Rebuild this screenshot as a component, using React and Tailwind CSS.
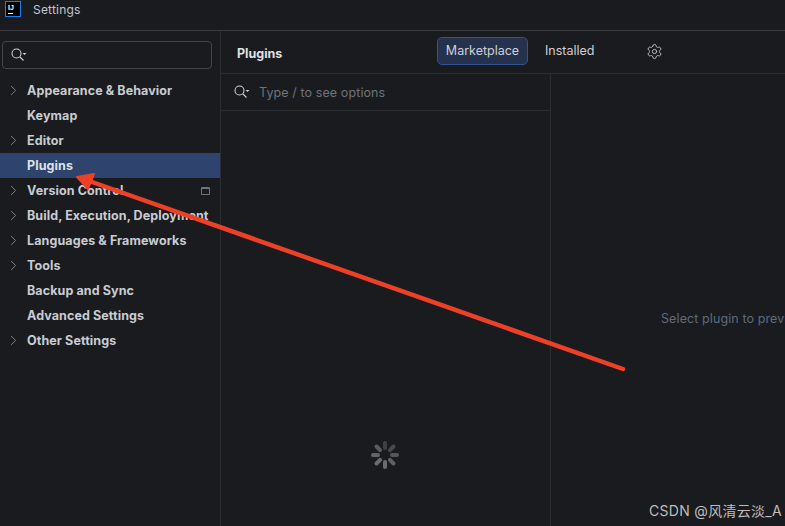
import { ChevronRight, Settings } from "lucide-react"

const items = [
  { label: "Appearance & Behavior", arrow: true },
  { label: "Keymap" },
  { label: "Editor", arrow: true },
  { label: "Plugins", selected: true },
  { label: "Version Control", arrow: true, badge: true },
  { label: "Build, Execution, Deployment", arrow: true },
  { label: "Languages & Frameworks", arrow: true },
  { label: "Tools", arrow: true },
  { label: "Backup and Sync" },
  { label: "Advanced Settings" },
  { label: "Other Settings", arrow: true },
]

function SearchIcon() {
  return (
    <svg width="16" height="14" viewBox="0 0 16 14" fill="none" className="shrink-0">
      <circle cx="5.5" cy="5.5" r="4.5" stroke="#ced0d6" strokeWidth="1.1" />
      <path d="M9 9l3.5 3.5" stroke="#ced0d6" strokeWidth="1.1" />
      <path d="M11.5 5h4l-2 2z" fill="#ced0d6" />
    </svg>
  )
}

function Logo() {
  return (
    <div className="w-4 h-4 border border-[#1a7fe8] bg-black flex flex-col pl-[2px] pt-[2px] shrink-0">
      <span className="font-['Liberation_Sans',sans-serif] font-bold text-[7px] leading-[7px] text-white">IJ</span>
      <span className="w-[5px] h-px bg-white mt-[2px]" />
    </div>
  )
}

function Spinner() {
  const spokes = [0, 45, 90, 135, 180, 225, 270, 315]
  const shades = ["#3f4145", "#47494d", "#55575b", "#5e6064", "#6a6c70", "#6a6c70", "#626468", "#5a5c60"]
  return (
    <svg width="28" height="28" viewBox="0 0 28 28">
      {spokes.map((a, i) => (
        <rect key={a} x="12" y="0" width="4" height="9" rx="2" fill={shades[i]} transform={`rotate(${a} 14 14)`} />
      ))}
    </svg>
  )
}

export default function App() {
  return (
    <div className="relative w-[785px] h-[526px] overflow-hidden bg-[#1a1b1e] text-[12.5px] text-[#ced0d6] font-['Inter','Noto_Sans_CJK_SC',sans-serif]">
      <header className="h-[31px] border-b border-[#393b40] flex items-start pl-[5px] pt-px gap-3">
        <Logo />
        <span className="text-[12px] leading-4 tracking-[0.2px] text-[#c5c7cc] pt-px">Settings</span>
      </header>

      <div className="flex h-[495px]">
        <aside className="w-[221px] shrink-0 border-r border-[#2b2d30]">
          <div className="pl-[2px] pr-2 pt-[10px] pb-[9px]">
            <div className="h-[28px] w-[210px] rounded border border-[#43454a] flex items-center pl-[8px]">
              <SearchIcon />
            </div>
          </div>
          {items.map((item) => (
            <div
              key={item.label}
              className={`h-[25px] flex items-center font-bold tracking-[0.1px] whitespace-nowrap ${item.selected ? "bg-[#2e436e] text-[#dfe1e5]" : "text-[#c9ccd2]"}`}
            >
              <span className="w-[27px] shrink-0 flex justify-end pr-[5px]">
                {item.arrow && <ChevronRight size={17} strokeWidth={1.2} className="text-[#8f9298]" />}
              </span>
              <span className="pt-[2px]">{item.label}</span>
              {item.badge && (
                <span className="ml-auto mr-[10px] w-[9px] h-2 rounded-[1px] border border-[#6f737a] border-t-2" />
              )}
            </div>
          ))}
        </aside>

        <main className="flex-1 flex flex-col min-w-0">
          <div className="h-[43px] border-b border-[#2b2d30] flex items-center pl-4">
            <span className="font-bold text-[#dfe1e5] w-[200px] pt-[5px]">Plugins</span>
            <div className="h-[28px] w-[91px] rounded-[5px] bg-[#25324d] border border-[#35538f] flex items-center justify-center pt-[2px] -mt-[3px]">
              Marketplace
            </div>
            <span className="ml-[17px] -mt-[1px]">Installed</span>
            <Settings size={17} strokeWidth={1.2} className="ml-[51px] -mt-[2px] text-[#ced0d6]" />
          </div>
          <div className="flex flex-1 min-h-0">
            <div className="w-[330px] shrink-0 border-r border-[#2b2d30] flex flex-col">
              <div className="h-[37px] border-b border-[#2b2d30] flex items-center pl-[13px] gap-[9px]">
                <SearchIcon />
                <span className="text-[#6f737a] tracking-[0.1px] pt-[2px]">Type / to see options</span>
              </div>
              <div className="flex-1 flex items-end justify-center pb-[57px] pr-px">
                <Spinner />
              </div>
            </div>
            <div className="flex-1 overflow-hidden pl-[110px] pt-[236px] whitespace-nowrap text-[#5e6b7a] tracking-[0.1px]">
              Select plugin to preview details
            </div>
          </div>
        </main>
      </div>

      {/* red annotation arrow */}
      <svg className="absolute left-0 top-0 pointer-events-none" width="785" height="526" viewBox="0 0 785 526">
        <path d="M623 369L92 182" stroke="#ee4027" strokeWidth="4.5" strokeLinecap="round" />
        <path d="M77 177L94 174L88 189z" fill="#ee4027" stroke="#ee4027" strokeWidth="2" strokeLinejoin="round" />
      </svg>

      <span className="absolute right-[3px] bottom-[5px] text-[14px] tracking-[0.3px] text-[#bdbdbd]">CSDN @风清云淡_A</span>
    </div>
  )
}
